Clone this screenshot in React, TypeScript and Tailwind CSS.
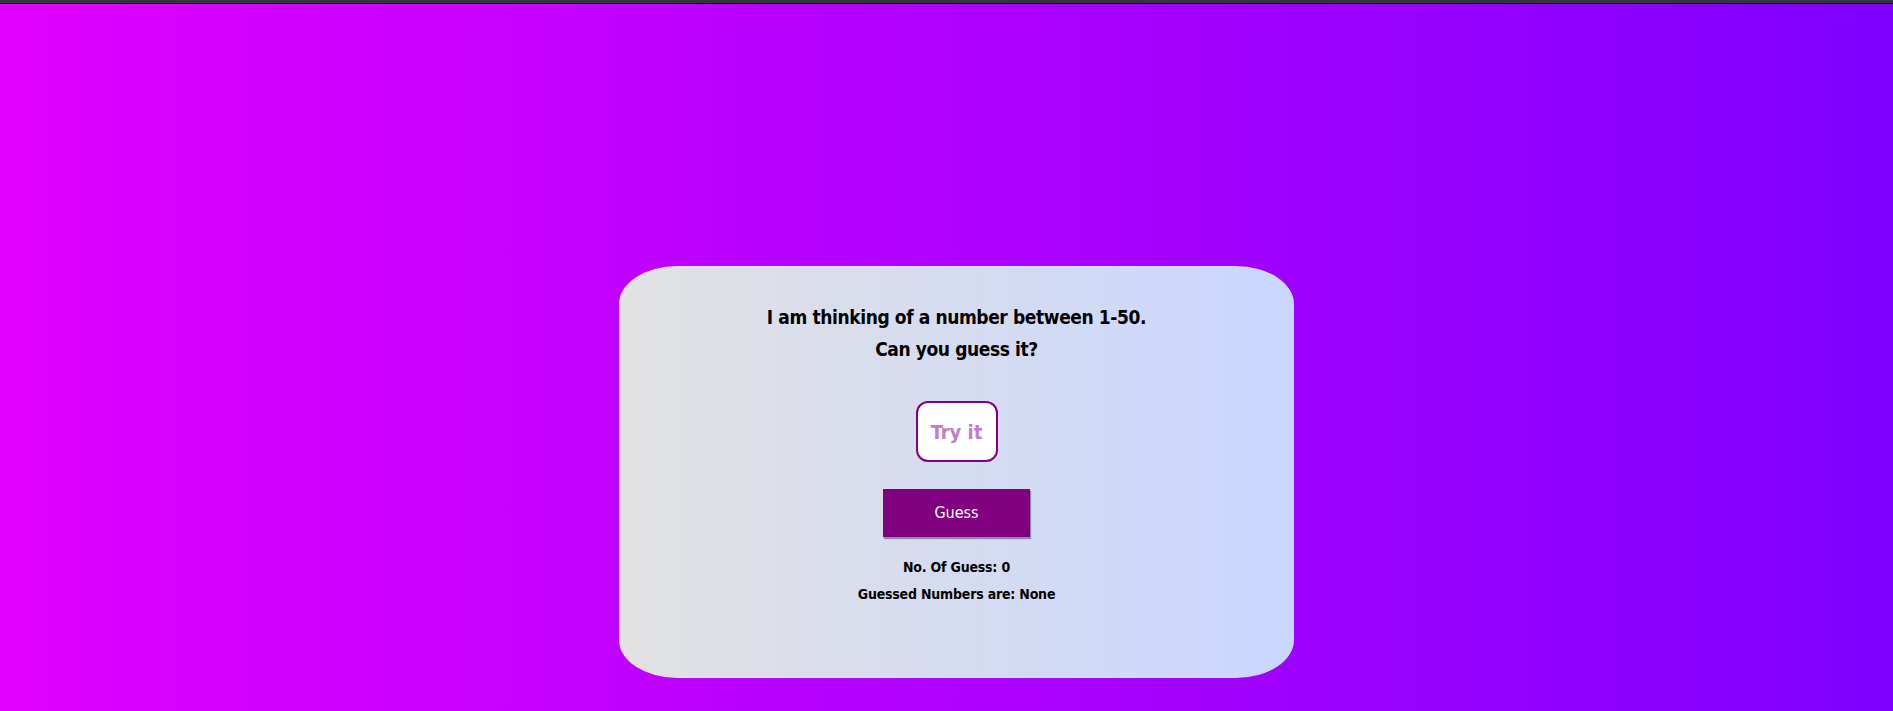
import React, { useState } from 'react';

export default function App() {
  const [value, setValue] = useState('');
  const [guesses, setGuesses] = useState<number[]>([]);

  const submit = () => {
    const n = parseInt(value, 10);
    if (!isNaN(n)) setGuesses((prev) => [...prev, n]);
    setValue('');
  };

  return (
    <div className="flex min-h-screen w-full flex-col bg-[linear-gradient(to_right,#e100ff,#7f00ff)] font-['DejaVu_Sans_Condensed','DejaVu_Sans',sans-serif] text-black">
      <div className="h-[3px] w-full bg-[#35353f]" />
      <div className="h-px w-full bg-black" />

      {/* game card */}
      <div className="mt-[262px] flex justify-center pl-[20px]">
        <div className="flex h-[412px] w-[675px] flex-col items-center rounded-[58px/38px] bg-[linear-gradient(to_right,#e2e2e2,#c9d6ff)] pt-[35px] text-center">
          <h2 className="text-[19px] font-bold leading-[32px] tracking-[-0.4px]">
            I am thinking of a number between 1-50.
            <br />
            Can you guess it?
          </h2>

          <input
            type="text"
            value={value}
            onChange={(e) => setValue(e.target.value)}
            placeholder="Try it"
            className="mt-[36px] h-[61px] w-[82px] rounded-[12px] border-2 border-[#800080] bg-white text-center text-[20px] font-bold text-[#800080] outline-none placeholder:text-[#c07fc4]"
          />

          <button
            onClick={submit}
            className="mt-[27px] h-[48px] w-[147px] bg-[#800080] text-[16px] text-white shadow-[1px_2px_1px_rgba(0,0,0,0.35)]"
          >
            Guess
          </button>

          <p className="mt-[21px] text-[14px] font-bold leading-[18px] tracking-[-0.2px]">
            No. Of Guess: {guesses.length}
          </p>
          <p className="mt-[9px] text-[14px] font-bold leading-[18px] tracking-[-0.2px]">
            Guessed Numbers are: {guesses.length ? guesses.join(', ') : 'None'}
          </p>
        </div>
      </div>
    </div>
  );
}
